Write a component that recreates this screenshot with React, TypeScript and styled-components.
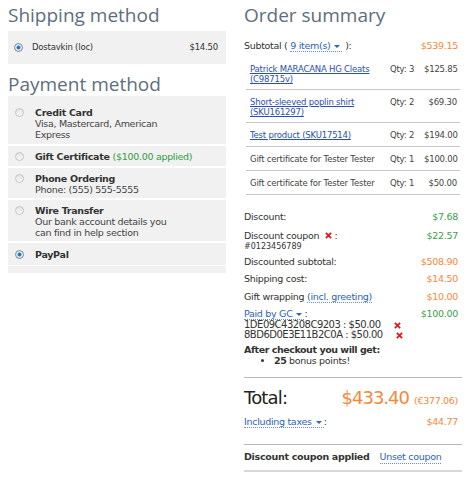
import React from 'react';
import styled, { createGlobalStyle } from 'styled-components';

const GlobalStyle = createGlobalStyle`
  body {
    margin: 0;
    background: #fff;
    font-family: 'DejaVu Sans', 'Liberation Sans', sans-serif;
    color: #333;
  }
`;

const Page = styled.div`
  display: grid;
  grid-template-columns: 218px 218px;
  column-gap: 18px;
  padding: 0 8px;
  width: 473px;
  box-sizing: border-box;
`;

const Column = styled.div`
  display: flex;
  flex-direction: column;
`;

const Heading = styled.h2<{ top?: number; bottom?: number }>`
  margin: ${({ top = 4, bottom = 5 }) => `${top}px 0 ${bottom}px 0`};
  font-family: 'Open Sans', 'Noto Sans', sans-serif;
  font-weight: 400;
  font-size: 19px;
  line-height: 22px;
  color: #5d6e7e;
`;

const OptionBox = styled.div<{ pad?: string; gap?: number }>`
  display: flex;
  align-items: flex-start;
  gap: ${({ gap = 11 }) => `${gap}px`};
  background: #f1f1f1;
  padding: ${({ pad = '5px 7px 3px 7px' }) => pad};
  font-size: 9.5px;
  line-height: 11px;
  letter-spacing: -0.3px;
`;

const OptionList = styled.div`
  display: flex;
  flex-direction: column;
  gap: 2px;
`;

const Radio = styled.span<{ checked?: boolean }>`
  flex: 0 0 9px;
  width: 9px;
  height: 9px;
  margin-top: 1px;
  border-radius: 50%;
  box-sizing: border-box;
  border: 1px solid ${({ checked }) => (checked ? '#7c8a99' : '#c4c4c4')};
  background: ${({ checked }) =>
    checked
      ? 'radial-gradient(circle, #1f6fb3 0, #2a7fc4 35%, #d8e2ec 45%, #eef2f6 100%)'
      : 'linear-gradient(180deg, #e2e2e2, #fafafa)'};
`;

const OptionText = styled.div`
  flex: 1;
  color: #444;
`;

const OptionTitle = styled.div`
  font-weight: bold;
  color: #333;
`;

const Applied = styled.span`
  font-weight: normal;
  color: #2f9e3f;
`;

const ShipRow = styled.div`
  flex: 1;
  display: flex;
  justify-content: space-between;
  font-size: 8.5px;
  letter-spacing: -0.2px;
  color: #333;
`;

const Strip = styled.div`
  height: 7px;
  background: #f1f1f1;
  margin-top: 1px;
`;

const Row = styled.div<{ mt?: number }>`
  display: flex;
  justify-content: space-between;
  align-items: flex-start;
  font-size: 9.5px;
  letter-spacing: -0.3px;
  line-height: 13px;
  margin-top: ${({ mt = 0 }) => `${mt}px`};
`;

const Value = styled.span<{ tone: 'orange' | 'green' }>`
  color: ${({ tone }) => (tone === 'orange' ? '#f5883a' : '#3aa048')};
  padding-right: 4px;
`;

const DotLink = styled.span`
  color: #2d62b4;
  border-bottom: 1px dotted #6a8fc8;
  cursor: pointer;
`;

const Caret = styled.span`
  display: inline-block;
  width: 0;
  height: 0;
  margin: 0 2px 1px 4px;
  border-left: 3px solid transparent;
  border-right: 3px solid transparent;
  border-top: 3px solid #2d62b4;
  vertical-align: middle;
`;

const Items = styled.div`
  margin: 5px 2px 0 2px;
  display: flex;
  flex-direction: column;
`;

const ItemRow = styled.div`
  display: grid;
  grid-template-columns: 136px 30px 1fr;
  column-gap: 4px;
  align-items: start;
  box-sizing: border-box;
  min-height: 24px;
  padding: 7px 3px 5px 4px;
  border-bottom: 1px solid #c6c6c6;
  font-size: 8.5px;
  letter-spacing: -0.2px;
  line-height: 10px;
  color: #444;
  white-space: nowrap;
`;

const ItemLink = styled.a`
  color: #2b4fb0;
  text-decoration: underline;
`;

const Price = styled.span`
  text-align: right;
`;

const Totals = styled.div`
  margin-top: 15px;
  display: flex;
  flex-direction: column;
`;

const Small = styled.div`
  font-size: 8px;
  line-height: 9px;
  letter-spacing: 0;
`;

const Cross = styled.svg`
  width: 7px;
  height: 7px;
  margin-left: 3px;
  vertical-align: 0;
`;

const CodeLine = styled.div`
  display: flex;
  align-items: center;
  gap: 10px;
  font-size: 10px;
  letter-spacing: -0.5px;
  line-height: 10px;
`;

const Bonus = styled.div`
  margin-top: 4px;
  font-size: 9.5px;
  letter-spacing: -0.3px;
  line-height: 11px;
  b {
    letter-spacing: -0.45px;
  }
  ul {
    margin: 0;
    padding-left: 30px;
  }
`;

const Spacer = styled.div<{ h: number }>`
  height: ${({ h }) => `${h}px`};
`;

const Rule = styled.hr<{ thick?: boolean }>`
  border: 0;
  height: ${({ thick }) => (thick ? '2px' : '1px')};
  background: ${({ thick }) => (thick ? '#d8d8d8' : '#b8b8b8')};
  margin: 0;
`;

const TotalRow = styled.div`
  display: flex;
  justify-content: space-between;
  align-items: baseline;
  margin-top: 9px;
  line-height: 22px;
`;

const TotalLabel = styled.span`
  font-size: 18px;
  letter-spacing: -0.8px;
  color: #222;
`;

const TotalValue = styled.span`
  font-size: 18px;
  letter-spacing: -1px;
  color: #f5883a;
  padding-right: 4px;
  small {
    font-size: 9.5px;
    letter-spacing: -0.3px;
    margin-left: 5px;
  }
`;

const CouponBar = styled.div`
  display: flex;
  gap: 10px;
  padding: 6px 0 6px 0;
  font-size: 9.5px;
  letter-spacing: -0.3px;
  line-height: 12px;
  b {
    color: #333;
  }
`;

const RedX = () => (
  <Cross viewBox="0 0 8 8">
    <path d="M1 1 L7 7 M7 1 L1 7" stroke="#e0161b" strokeWidth="2" />
  </Cross>
);

const payments = [
  { title: 'Credit Card', text: ['Visa, Mastercard, American', 'Express'], pad: '11px 7px 4px 7px' },
  { title: 'Gift Certificate', applied: '($100.00 applied)', text: [], pad: '5px 7px 4px 7px' },
  { title: 'Phone Ordering', text: ['Phone: (555) 555-5555'] },
  { title: 'Wire Transfer', text: ['Our bank account details you', 'can find in help section'] },
  { title: 'PayPal', text: [], checked: true, pad: '6px 7px 5px 7px' },
];

const items = [
  { name: ['Patrick MARACANA HG Cleats', '(C98715v)'], link: true, qty: 3, price: '$125.85' },
  { name: ['Short-sleeved poplin shirt', '(SKU161297)'], link: true, qty: 2, price: '$69.30' },
  { name: ['Test product (SKU17514)'], link: true, qty: 2, price: '$194.00' },
  { name: ['Gift certificate for Tester Tester'], qty: 1, price: '$100.00' },
  { name: ['Gift certificate for Tester Tester'], qty: 1, price: '$50.00' },
];

const App = () => (
  <>
    <GlobalStyle />
    <Page>
      <Column>
        <Heading>Shipping method</Heading>
        <OptionBox pad="11px 8px 11px 6px" gap={9}>
          <Radio checked />
          <ShipRow>
            <span>Dostavkin (loc)</span>
            <span>$14.50</span>
          </ShipRow>
        </OptionBox>
        <Heading top={9} bottom={1}>
          Payment method
        </Heading>
        <OptionList>
          {payments.map((p) => (
            <OptionBox key={p.title} pad={p.pad}>
              <Radio checked={p.checked} />
              <OptionText>
                <OptionTitle>
                  {p.title} {p.applied && <Applied>{p.applied}</Applied>}
                </OptionTitle>
                {p.text.map((t) => (
                  <div key={t}>{t}</div>
                ))}
              </OptionText>
            </OptionBox>
          ))}
        </OptionList>
        <Strip />
      </Column>

      <Column>
        <Heading>Order summary</Heading>
        <Row mt={8}>
          <span>
            Subtotal ( <DotLink>9 item(s)<Caret /></DotLink> ):
          </span>
          <Value tone="orange">$539.15</Value>
        </Row>
        <Items>
          {items.map((it, i) => (
            <ItemRow key={i}>
              <span>
                {it.link ? (
                  <ItemLink href="#">
                    {it.name.map((n, j) => (
                      <React.Fragment key={j}>
                        {n}
                        {j < it.name.length - 1 && <br />}
                      </React.Fragment>
                    ))}
                  </ItemLink>
                ) : (
                  it.name[0]
                )}
              </span>
              <span>Qty: {it.qty}</span>
              <Price>{it.price}</Price>
            </ItemRow>
          ))}
        </Items>
        <Totals>
          <Row>
            <span>Discount:</span>
            <Value tone="green">$7.68</Value>
          </Row>
          <Row mt={6}>
            <div>
              <span>
                Discount coupon <RedX /> :
              </span>
              <Small>#0123456789</Small>
            </div>
            <Value tone="green">$22.57</Value>
          </Row>
          <Row mt={4}>
            <span>Discounted subtotal:</span>
            <Value tone="orange">$508.90</Value>
          </Row>
          <Row mt={4}>
            <span>Shipping cost:</span>
            <Value tone="orange">$14.50</Value>
          </Row>
          <Row mt={5}>
            <span>
              Gift wrapping <DotLink>(incl. greeting)</DotLink>
            </span>
            <Value tone="orange">$10.00</Value>
          </Row>
          <Row mt={4}>
            <span>
              <DotLink>Paid by GC<Caret /></DotLink>:
            </span>
            <Value tone="green">$100.00</Value>
          </Row>
          <CodeLine>
            <span>1DE09C43208C9203 : $50.00</span>
            <RedX />
          </CodeLine>
          <CodeLine>
            <span>8BD6D0E3E11B2C0A : $50.00</span>
            <RedX />
          </CodeLine>
          <Bonus>
            <b>After checkout you will get:</b>
            <ul>
              <li>
                <b>25</b> bonus points!
              </li>
            </ul>
          </Bonus>
        </Totals>
        <Spacer h={11} />
        <Rule />
        <TotalRow>
          <TotalLabel>Total:</TotalLabel>
          <TotalValue>
            $433.40<small>(€377.06)</small>
          </TotalValue>
        </TotalRow>
        <Row mt={3}>
          <span>
            <DotLink>Including taxes<Caret /></DotLink>:
          </span>
          <Value tone="orange">$44.77</Value>
        </Row>
        <Spacer h={16} />
        <Rule />
        <CouponBar>
          <b>Discount coupon applied</b>
          <DotLink>Unset coupon</DotLink>
        </CouponBar>
        <Rule thick />
      </Column>
    </Page>
  </>
);

export default App;
